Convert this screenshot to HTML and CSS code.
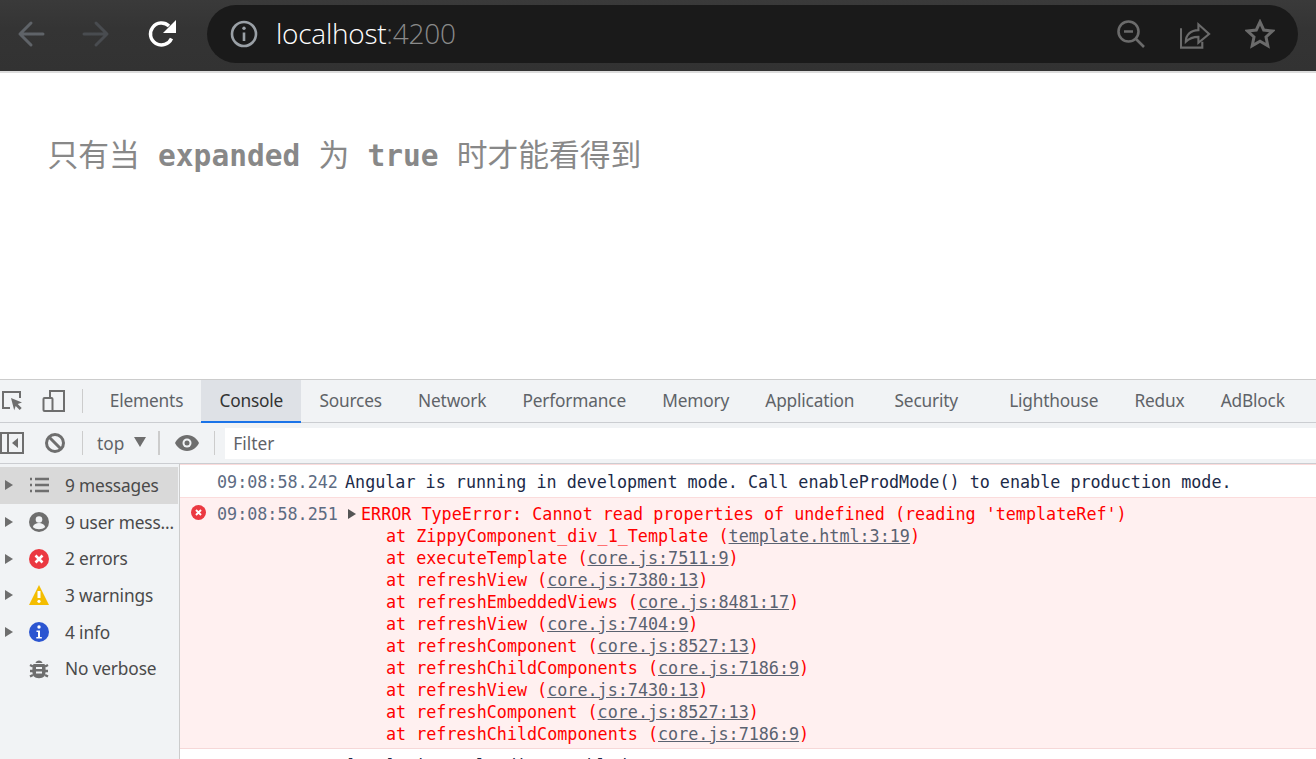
FILE: index.html
```html
<!DOCTYPE html>
<html lang="zh">
<head>
<meta charset="utf-8">
<title>localhost:4200</title>
<link rel="stylesheet" href="styles.css">
</head>
<body>
<header class="browser">
  <svg class="nav nav-back" viewBox="0 0 28 28"><path d="M26 14H3M14 3 3 14l11 11"/></svg>
  <svg class="nav nav-fwd" viewBox="0 0 28 28"><path d="M2 14h23M14 3l11 11-11 11"/></svg>
  <svg class="reload" viewBox="0 0 30 30"><path class="reload-arc" d="M24.5 19.5A11 11 0 1 1 22 7"/><path class="reload-head" d="M29 1v13H16z"/></svg>
  <div class="omnibox">
    <svg class="info" viewBox="0 0 28 28"><circle cx="14" cy="14" r="12"/><path d="M14 12.5V21"/><circle class="info-dot" cx="14" cy="8.2" r="1.7"/></svg>
    <div class="url">localhost<span class="port">:4200</span></div>
    <svg class="omni-icon zoom-ic" viewBox="0 0 28 28"><circle cx="11.5" cy="11.5" r="10"/><path d="M7 11.5h9M19 19l8 8"/></svg>
    <svg class="omni-icon share-ic" viewBox="0 0 32 30"><path d="M1 9v20h22v-6"/><path d="M6 23c0-7 5-12 13-12V5l11 10-11 9v-6c-5 0-9 1-13 5z"/></svg>
    <svg class="omni-icon star-ic" viewBox="0 0 30 30"><path d="m15 3 3.700 8 8.800 1-6.500 6 1.800 8.700L15 22.300 7.200 26.700 9 18l-6.500-6 8.800-1z"/></svg>
  </div>
</header>
<main class="page">
  <p class="headline">只有当 <code>expanded</code> 为 <code>true</code> 时才能看得到</p>
</main>
<section class="devtools">
  <nav class="tabs">
    <svg class="tool-ic inspect" viewBox="0 0 24 24"><path class="ln" d="M9 19H2V3h17v6"/><path class="fl" d="M10 9l11 4.500-4.300 1.500 4 4-2 2-4-4-1.500 4.300z"/></svg>
    <svg class="tool-ic device" viewBox="0 0 24 24"><path class="ln" d="M8 8V2h14v20H9"/><rect class="ln" x="1.500" y="9" width="9" height="13" rx="1"/></svg>
    <span class="sep"></span>
    <span class="tab">Elements</span>
    <span class="tab active">Console</span>
    <span class="tab">Sources</span>
    <span class="tab">Network</span>
    <span class="tab">Performance</span>
    <span class="tab">Memory</span>
    <span class="tab">Application</span>
    <span class="tab tab-gap">Security</span>
    <span class="tab">Lighthouse</span>
    <span class="tab">Redux</span>
    <span class="tab">AdBlock</span>
  </nav>
  <div class="toolbar">
    <svg class="bar-ic panel" viewBox="0 0 24 24"><rect class="ln" x="1" y="2" width="22" height="20"/><path class="ln" d="M8 2v20"/><path class="fl" d="M18 7v10l-6-5z"/></svg>
    <svg class="bar-ic clear" viewBox="0 0 24 24"><circle cx="12" cy="12" r="8.500"/><path d="m6 6 12 12"/></svg>
    <span class="sep"></span>
    <span class="ctx">top</span>
    <span class="caret"></span>
    <span class="sep sep-b"></span>
    <svg class="eye" viewBox="0 0 26 18"><path class="eye-out" d="M13 1C7 1 3 5 1 9c2 4 6 8 12 8s10-4 12-8c-2-4-6-8-12-8z"/><circle class="eye-in" cx="13" cy="9" r="4.500"/><circle class="eye-pt" cx="13" cy="9" r="2.500"/></svg>
    <span class="sep sep-c"></span>
    <div class="filter">Filter</div>
  </div>
  <div class="panes">
    <aside class="side">
      <div class="side-row selected"><i class="tri"></i><svg class="side-ic" viewBox="0 0 20 20"><path class="list" d="M1 4h2M6 4h14M1 10h2M6 10h14M1 16h2M6 16h14"/></svg><span>9 messages</span></div>
      <div class="side-row"><i class="tri"></i><svg class="side-ic" viewBox="0 0 20 20"><circle cx="10" cy="10" r="10" fill="#6e6e6e"/><circle cx="10" cy="7.500" r="3.300" fill="#f1f3f5"/><path d="M3.800 15c1-3 3.500-4 6.200-4s5.200 1 6.200 4c-3.200 3-9.200 3-12.400 0z" fill="#f1f3f5"/></svg><span>9 user mess...</span></div>
      <div class="side-row"><i class="tri"></i><svg class="side-ic" viewBox="0 0 20 20"><circle cx="10" cy="10" r="10" fill="#eb3941"/><path d="m6.500 6.500 7 7m0-7-7 7" stroke="#fff" stroke-width="2.600"/></svg><span>2 errors</span></div>
      <div class="side-row"><i class="tri"></i><svg class="side-ic" viewBox="0 0 20 20"><path d="M10 0 20 20H0z" fill="#f4bd00"/><path d="M10 6v7" stroke="#fff" stroke-width="3"/><circle cx="10" cy="16.300" r="1.600" fill="#fff"/></svg><span>3 warnings</span></div>
      <div class="side-row"><i class="tri"></i><svg class="side-ic" viewBox="0 0 20 20"><circle cx="10" cy="10" r="10" fill="#2b55d1"/><circle cx="10" cy="5" r="1.700" fill="#fff"/><path d="M7.500 8.500H11V15h1.800v1.500H7.300V15H9V10H7.500z" fill="#fff"/></svg><span>4 info</span></div>
      <div class="side-row"><i class="tri tri-none"></i><svg class="side-ic" viewBox="0 0 20 20"><path d="M4.500 5h11c1.500 3 1.500 10 0 12-2.500 3-8.500 3-11 0C3 15 3 8 4.500 5zM6.500 4C7 0.500 13 0.500 13.500 4z" fill="#6e6e6e"/><path d="M1 6l3 1.500M19 6l-3 1.500M1 12h3M19 12h-3M1 17.500 4 16M19 17.500 16 16" stroke="#6e6e6e" stroke-width="2.400"/><path d="M7 9h6M7 13.500h6" stroke="#f1f3f5" stroke-width="2"/></svg><span>No verbose</span></div>
    </aside>
    <div class="log">
      <div class="msg msg-info"><span class="time">09:08:58.242</span><span class="body">Angular is running in development mode. Call enableProdMode() to enable production mode.</span></div>
      <div class="msg msg-err">
        <svg class="err-ic" viewBox="0 0 16 16"><circle cx="8" cy="8" r="8" fill="#eb3941"/><path d="m5.300 5.300 5.400 5.400m0-5.400-5.400 5.400" stroke="#fff" stroke-width="2"/></svg>
        <span class="time">09:08:58.251</span>
        <div class="err-body">
          <div class="err-head"><i class="tri tri-err"></i>ERROR TypeError: Cannot read properties of undefined (reading 'templateRef')</div>
          <div class="st">at ZippyComponent_div_1_Template (<a>template.html:3:19</a>)</div>
          <div class="st">at executeTemplate (<a>core.js:7511:9</a>)</div>
          <div class="st">at refreshView (<a>core.js:7380:13</a>)</div>
          <div class="st">at refreshEmbeddedViews (<a>core.js:8481:17</a>)</div>
          <div class="st">at refreshView (<a>core.js:7404:9</a>)</div>
          <div class="st">at refreshComponent (<a>core.js:8527:13</a>)</div>
          <div class="st">at refreshChildComponents (<a>core.js:7186:9</a>)</div>
          <div class="st">at refreshView (<a>core.js:7430:13</a>)</div>
          <div class="st">at refreshComponent (<a>core.js:8527:13</a>)</div>
          <div class="st">at refreshChildComponents (<a>core.js:7186:9</a>)</div>
        </div>
      </div>
      <div class="msg msg-last"><span class="time"></span><span class="body">[WDS] Live Reloading enabled.</span></div>
    </div>
  </div>
</section>
</body>
</html>
```
FILE: styles.css
```css
* { box-sizing: border-box; }
html, body { margin: 0; height: 759px; overflow: hidden; background: #fff; }
body { display: flex; flex-direction: column; font-family: "Noto Sans", "Open Sans", sans-serif; }

.browser {
  height: 73px; flex: none; display: flex; align-items: center;
  padding: 0 18px 3px 17px; background: linear-gradient(#3a3a3a, #343434 40%, #323232);
  border-bottom: 2px solid #dcdcdc;
}
.nav { width: 28px; height: 28px; flex: none; fill: none; stroke-width: 3; stroke-linecap: round; stroke-linejoin: round; }
.nav-back { stroke: #5f6368; }
.nav-fwd { stroke: #494c50; margin-left: 37px; }
.reload { width: 30px; height: 30px; flex: none; margin-left: 37px; }
.reload-arc { fill: none; stroke: #fff; stroke-width: 3.400; }
.reload-head { fill: #fff; }
.omnibox {
  margin-left: 30px; width: 1091px; height: 58px; flex: none; border-radius: 29px; background: #1a1a1a;
  display: flex; align-items: center; padding: 0 23px;
}
.info { width: 28px; height: 28px; flex: none; fill: none; stroke: #9aa0a6; stroke-width: 2.600; }
.info-dot { fill: #9aa0a6; stroke: none; }
.url {
  margin: 0 0 2px 18px; font: 300 28px "Open Sans", sans-serif; letter-spacing: -.25px; color: #fff; white-space: nowrap; flex: 1;
}
.port { color: #8a8a8a; }
.omni-icon { flex: none; fill: none; stroke: #6b6b6b; stroke-width: 2.600; }
.zoom-ic { width: 28px; height: 28px; }
.share-ic { width: 31px; height: 30px; margin-left: 35px; stroke-width: 2.200; }
.star-ic { width: 30px; height: 30px; margin-left: 34px; stroke-width: 3; }

.page { height: 306px; flex: none; padding: 62px 0 0 47.500px; }
.headline {
  margin: 0; font: 400 30.800px/36px "Noto Sans CJK SC", sans-serif; color: #888; white-space: pre;
  word-spacing: 11.300px;
}
.headline code { font: 700 29.500px "DejaVu Sans Mono", monospace; color: #888; word-spacing: 0; }

.devtools { flex: 1; min-height: 0; display: flex; flex-direction: column; border-top: 1px solid #ccc; background: #f1f3f5; color: #5f6368; }
.tabs { height: 43px; flex: none; display: flex; align-items: stretch; border-bottom: 1px solid #cbcdd1; padding-bottom: 0; }
.tool-ic { width: 24px; height: 24px; flex: none; align-self: center; }
.inspect { margin-left: 1px; }
.device { margin-left: 17px; }
.ln { fill: none; stroke: #6e6e6e; stroke-width: 2; }
.fl { fill: #6e6e6e; }
.sep { width: 1px; height: 24px; background: #ccc; flex: none; align-self: center; margin-left: 16px; margin-right: 8.700px; }
.tab {
  padding: 0 18.100px; font-size: 17.300px; letter-spacing: -.180px; display: flex; align-items: center; color: #5f6368; white-space: nowrap;
  border-bottom: 2px solid transparent; margin-bottom: -1px;
}
.tab.active { background: #dee1e6; color: #333; border-bottom-color: #1a73e8; }
.tab-gap { margin-left: 4px; margin-right: 15px; }

.toolbar { height: 41px; flex: none; display: flex; align-items: center; border-bottom: 1px solid #cbcdd1; }
.bar-ic { width: 24px; height: 24px; flex: none; }
.panel { margin-left: 0; }
.clear { margin-left: 19px; fill: none; stroke: #6e6e6e; stroke-width: 3; }
.toolbar .sep { margin-left: 15px; margin-right: 14px; }
.ctx { font-size: 17.300px; color: #5f6368; }
.caret { width: 0; height: 0; margin-left: 10px; margin-bottom: 3px; border: 6px solid transparent; border-top: 10px solid #6e6e6e; border-bottom: 0; }
.toolbar .sep-b { margin-left: 12px; margin-right: 14px; width: 2px; }
.eye { width: 26px; height: 18px; flex: none; }
.eye-out { fill: #6e6e6e; }
.eye-in { fill: #f1f3f5; }
.eye-pt { fill: #6e6e6e; }
.toolbar .sep-c { margin-left: 14px; margin-right: 10px; }
.filter { flex: 1; height: 31px; background: #fff; padding-left: 8px; font-size: 17.300px; line-height: 31px; color: #5f6368; }

.panes { flex: 1; min-height: 0; display: flex; }
.side { width: 180px; flex: none; padding-top: 3px; border-right: 1px solid #ccc; background: #f1f3f5; }
.side-row { height: 36.700px; display: flex; align-items: center; font-size: 17.300px; letter-spacing: -.150px; color: #4a4a4a; white-space: nowrap; }
.side-row.selected { background: #d9d9d9; width: 178px; }
.tri { width: 0; height: 0; flex: none; margin-left: 5px; border: 5.500px solid transparent; border-left: 8px solid #6e6e6e; border-right: 0; }
.tri-none { visibility: hidden; }
.side-ic { width: 20px; height: 20px; flex: none; margin-left: 16px; margin-right: 16px; }
.list { stroke: #6e6e6e; stroke-width: 2.400; fill: none; }

.log { flex: 1; min-width: 0; background: #fff; font: 16.740px/22px "DejaVu Sans Mono", monospace; border-top: 1px solid #fbdcdc; overflow: hidden; color: #1c2a48; white-space: nowrap; }
.msg { display: flex; position: relative; padding-left: 37px; }
.msg-info { height: 33px; padding-top: 6px; border-bottom: 1px solid #fbdcdc; }
.time { width: 128px; flex: none; color: #5d6b82; }
.msg-err { background: #fff0f0; height: 251px; padding-top: 5px; border-bottom: 1px solid #f6d8d8; color: #f00; }
.err-ic { position: absolute; left: 11px; top: 7px; width: 15px; height: 15px; }
.err-body { flex: 1; }
.err-head { display: flex; align-items: center; }
.tri-err { margin-left: 3px; margin-right: 5px; border-width: 5.500px 0 5.500px 8px; border-style: solid; border-color: transparent transparent transparent #555; }
.st { padding-left: 41px; }
.st a { color: #5a6270; text-decoration: underline; }
.msg-last .body { display: block; padding-top: 6px; }
```
